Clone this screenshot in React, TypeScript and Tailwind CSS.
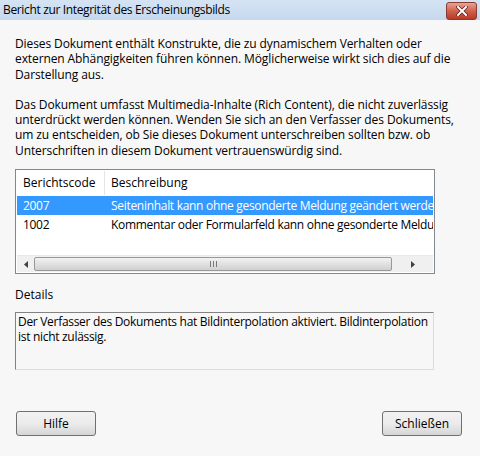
import React from 'react';

const font = { fontFamily: '"Open Sans", "Noto Sans", sans-serif' };

const Dialog = () => {
  return (
    <div className="w-[480px] h-[456px] bg-[#f7f7f7] flex flex-col text-[12px] text-black overflow-hidden" style={font}>
      <div className="h-[20px] flex items-center justify-between pl-[3px] pr-[3px] bg-gradient-to-b from-[#d5e4f4] to-[#c4d8ee]">
        <span className="text-[12px] tracking-[-0.35px] leading-none text-black">Bericht zur Integrität des Erscheinungsbilds</span>
        <div className="w-[31px] h-[18px] mt-[1px] rounded-[3px] border border-[#8a3a30] bg-gradient-to-b from-[#e8a395] via-[#d1604c] to-[#b83a24] flex items-center justify-center">
          <svg width="12" height="10" viewBox="0 0 12 10">
            <path d="M2 1 L10 9 M10 1 L2 9" stroke="#5a1f16" strokeWidth="3.4" strokeLinecap="square" />
            <path d="M2 1 L10 9 M10 1 L2 9" stroke="#ffffff" strokeWidth="2" strokeLinecap="square" />
          </svg>
        </div>
      </div>

      <div className="flex flex-col px-[15px] pt-[16px]">
        <p className="leading-[15.3px] whitespace-nowrap tracking-[-0.1px]">
          Dieses Dokument enthält Konstrukte, die zu dynamischem Verhalten oder<br />
          externen Abhängigkeiten führen können. Möglicherweise wirkt sich dies auf die<br />
          Darstellung aus.
        </p>
        <p className="leading-[15.3px] whitespace-nowrap tracking-[-0.1px] mt-[15px]">
          Das Dokument umfasst Multimedia-Inhalte (Rich Content), die nicht zuverlässig<br />
          unterdrückt werden können. Wenden Sie sich an den Verfasser des Dokuments,<br />
          um zu entscheiden, ob Sie dieses Dokument unterschreiben sollten bzw. ob<br />
          Unterschriften in diesem Dokument vertrauenswürdig sind.
        </p>

        <div className="mt-[11px] w-[420px] h-[105px] border border-[#828790] bg-white flex flex-col p-[1px]">
          <div className="h-[24px] flex items-center">
            <div className="w-[88px] pl-[6px] border-r border-[#e5e5e5] h-full flex items-center">Berichtscode</div>
            <div className="pl-[6px]">Beschreibung</div>
          </div>
          <div className="h-[19px] mt-[1px] bg-[#3399ff] text-white flex items-center whitespace-nowrap overflow-hidden tracking-[-0.3px]">
            <div className="w-[88px] pl-[6px] shrink-0">2007</div>
            <div className="pl-[6px]">Seiteninhalt kann ohne gesonderte Meldung geändert werden</div>
          </div>
          <div className="h-[19px] flex items-center whitespace-nowrap overflow-hidden tracking-[-0.3px]">
            <div className="w-[88px] pl-[6px] shrink-0">1002</div>
            <div className="pl-[6px]">Kommentar oder Formularfeld kann ohne gesonderte Meldung geändert werden</div>
          </div>
          <div className="flex-1" />
          <div className="h-[17px] bg-[#f0f0f0] border-t border-[#e8e8e8] flex items-center">
            <div className="w-[17px] h-full flex items-center justify-center">
              <svg width="4" height="7" viewBox="0 0 4 7"><path d="M4 0 L0 3.5 L4 7 Z" fill="#404040" /></svg>
            </div>
            <div className="w-[358px] h-[14px] rounded-[2px] border border-[#999] bg-gradient-to-b from-[#f2f2f2] to-[#d0d0d0] flex items-center justify-center">
              <div className="flex">
                <div className="w-[1px] h-[6px] bg-[#777]" />
                <div className="w-[1px] h-[6px] bg-[#777] ml-[2px]" />
                <div className="w-[1px] h-[6px] bg-[#777] ml-[2px]" />
              </div>
            </div>
            <div className="flex-1 h-full flex items-center justify-center">
              <svg width="4" height="7" viewBox="0 0 4 7"><path d="M0 0 L4 3.5 L0 7 Z" fill="#404040" /></svg>
            </div>
          </div>
        </div>

        <div className="mt-[12px]">Details</div>

        <div className="mt-[8px] w-[419px] h-[58px] border border-[#dcdcdc] border-t-[#828282] border-l-[#828282] bg-[#f7f7f7] px-[2px] pt-[1px] leading-[15px] whitespace-nowrap overflow-hidden tracking-[-0.3px]">
          Der Verfasser des Dokuments hat Bildinterpolation aktiviert. Bildinterpolation<br />
          ist nicht zulässig.
        </div>

        <div className="mt-[41px] flex justify-between pl-[1px] pr-[3px]">
          <button className="w-[80px] h-[25px] rounded-[3px] border border-[#707070] bg-gradient-to-b from-[#f2f2f2] via-[#ebebeb] to-[#d6d6d6]">Hilfe</button>
          <button className="w-[80px] h-[25px] rounded-[3px] border border-[#707070] bg-gradient-to-b from-[#f2f2f2] via-[#ebebeb] to-[#d6d6d6]">Schließen</button>
        </div>
      </div>
    </div>
  );
};

export default function App() {
  return <Dialog />;
}
